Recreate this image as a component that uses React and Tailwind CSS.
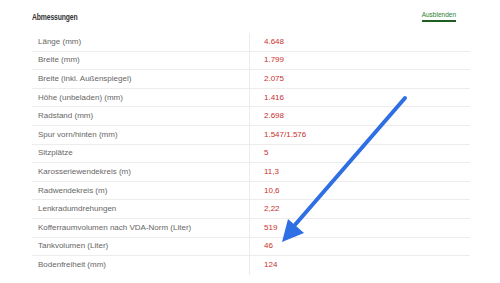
const rows = [
  ["Länge (mm)", "4.648"],
  ["Breite (mm)", "1.799"],
  ["Breite (inkl. Außenspiegel)", "2.075"],
  ["Höhe (unbeladen) (mm)", "1.416"],
  ["Radstand (mm)", "2.698"],
  ["Spur vorn/hinten (mm)", "1.547/1.576"],
  ["Sitzplätze", "5"],
  ["Karosseriewendekreis (m)", "11,3"],
  ["Radwendekreis (m)", "10,6"],
  ["Lenkradumdrehungen", "2,22"],
  ["Kofferraumvolumen nach VDA-Norm (Liter)", "519"],
  ["Tankvolumen (Liter)", "46"],
  ["Bodenfreiheit (mm)", "124"],
];

export default function App() {
  return (
    <div className="relative w-[500px] h-[283px] bg-white overflow-hidden font-['Liberation_Sans',Arial,sans-serif]">
      <div className="flex items-start justify-between pl-[32px] pr-[44px] pt-[10px] h-[33px]">
        <h2 className="inline-block origin-left scale-x-[0.72] text-[9.5px] font-bold text-[#333] tracking-[-0.2px]">
          Abmessungen
        </h2>
        <a className="text-[6.5px] text-[#2e7d32] border-b-2 border-[#1f5e22] leading-[8px] pb-[1px] mt-[1px]">
          Ausblenden
        </a>
      </div>

      <div className="ml-[32px] w-[438px] flex flex-col">
        {rows.map(([label, value], i) => (
          <div
            key={i}
            className={`flex h-[18.6px] ${i < rows.length - 1 ? "border-b border-[#ececec]" : ""}`}
          >
            <div className="w-[218px] border-r border-[#ececec] pl-[6px] flex items-center text-[8px] text-[#666]">
              {label}
            </div>
            <div className="flex-1 pl-[14px] flex items-center text-[8px] text-[#c9302c]">
              {value}
            </div>
          </div>
        ))}
      </div>

      <svg className="absolute left-0 top-0" width="500" height="283" viewBox="0 0 500 283">
        <line x1="405" y1="98" x2="294" y2="226" stroke="#2f6fe4" strokeWidth="4" strokeLinecap="round" />
        <polygon points="282,242 288,219 304,233" fill="#2f6fe4" />
      </svg>
    </div>
  );
}
